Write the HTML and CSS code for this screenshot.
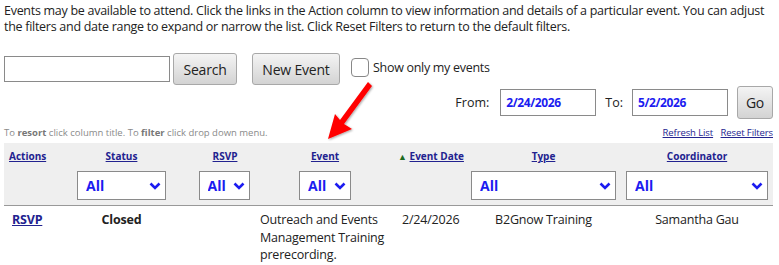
FILE: index.html
```html
<!DOCTYPE html>
<html lang="en">
<head>
    <meta charset="UTF-8">
    <meta name="viewport" content="width=device-width, initial-scale=1.0">
    <title>Events</title>
    <link rel="stylesheet" href="styles.css">
</head>
<body>
    <p class="intro">Events may be available to attend. Click the links in the Action column to view information and details of a particular event. You can adjust the filters and date range to expand or narrow the list. Click Reset Filters to return to the default filters.</p>

    <div class="search-row">
        <input type="text" class="search-box">
        <button class="btn btn-search">Search</button>
        <button class="btn btn-new">New Event</button>
        <label class="mine">
            <span class="check"></span>
            Show only my events
        </label>
    </div>

    <div class="date-row">
        <span class="date-label">From:</span>
        <input type="text" class="date-box" value="2/24/2026">
        <span class="date-label to">To:</span>
        <input type="text" class="date-box" value="5/2/2026">
        <button class="btn btn-go">Go</button>
    </div>

    <div class="hint-row">
        <span class="hint">To <b>resort</b> click column title. To <b>filter</b> click drop down menu.</span>
        <span class="hint-links">
            <a href="#">Refresh List</a>
            <a href="#">Reset Filters</a>
        </span>
    </div>

    <!-- callout arrow pointing at the Event column -->
    <svg class="callout" width="60" height="70" viewBox="0 0 60 70">
        <defs>
            <filter id="shade" x="-20%" y="-20%" width="140%" height="140%">
                <feDropShadow dx="1" dy="1" stdDeviation="1.2" flood-color="#000" flood-opacity="0.35"/>
            </filter>
        </defs>
        <path d="M45 3 L49 7 L21 45 L29 50 L5 60 L12 35 L17 41 Z" fill="#ff0000" filter="url(#shade)"/>
    </svg>

    <table class="events">
        <colgroup>
            <col style="width: 68px">
            <col style="width: 99px">
            <col style="width: 84px">
            <col style="width: 140px">
            <col style="width: 71px">
            <col style="width: 155px">
            <col style="width: 152px">
        </colgroup>
        <thead>
            <tr class="titles">
                <th class="c-actions"><a href="#">Actions</a></th>
                <th class="c-status"><a href="#">Status</a></th>
                <th class="c-rsvp"><a href="#">RSVP</a></th>
                <th class="c-event"><a href="#">Event</a></th>
                <th class="c-date"><span class="sort-up">&#9650;</span> <a href="#">Event Date</a></th>
                <th class="c-type"><a href="#">Type</a></th>
                <th class="c-coord"><a href="#">Coordinator</a></th>
            </tr>
            <tr class="filters">
                <th></th>
                <th class="c-status"><div class="filter w-status"><select><option>All</option></select><svg class="chev" width="12" height="8" viewBox="0 0 12 8"><path d="M1.5 1.5 L6 6 L10.5 1.5" fill="none" stroke="#1c1cf0" stroke-width="2.6"/></svg></div></th>
                <th class="c-rsvp"><div class="filter w-rsvp"><select><option>All</option></select><svg class="chev" width="12" height="8" viewBox="0 0 12 8"><path d="M1.5 1.5 L6 6 L10.5 1.5" fill="none" stroke="#1c1cf0" stroke-width="2.6"/></svg></div></th>
                <th class="c-event"><div class="filter w-event"><select><option>All</option></select><svg class="chev" width="12" height="8" viewBox="0 0 12 8"><path d="M1.5 1.5 L6 6 L10.5 1.5" fill="none" stroke="#1c1cf0" stroke-width="2.6"/></svg></div></th>
                <th></th>
                <th class="c-type"><div class="filter w-type"><select><option>All</option></select><svg class="chev" width="12" height="8" viewBox="0 0 12 8"><path d="M1.5 1.5 L6 6 L10.5 1.5" fill="none" stroke="#1c1cf0" stroke-width="2.6"/></svg></div></th>
                <th class="c-coord"><div class="filter w-coord"><select><option>All</option></select><svg class="chev" width="12" height="8" viewBox="0 0 12 8"><path d="M1.5 1.5 L6 6 L10.5 1.5" fill="none" stroke="#1c1cf0" stroke-width="2.6"/></svg></div></th>
            </tr>
        </thead>
        <tbody>
            <tr>
                <td class="c-actions"><a href="#" class="rsvp-link">RSVP</a></td>
                <td class="c-status"><b>Closed</b></td>
                <td class="c-rsvp"></td>
                <td class="c-event">Outreach and Events Management Training prerecording.</td>
                <td class="c-date">2/24/2026</td>
                <td class="c-type">B2Gnow Training</td>
                <td class="c-coord">Samantha Gau</td>
            </tr>
        </tbody>
    </table>
</body>
</html>
```

FILE: styles.css
```css
body {
    font-family: 'Open Sans', sans-serif;
    font-size: 12.5px;
    color: #222;
    background-color: #fff;
    margin: 0;
    padding: 3px 6px 0 4px;
    position: relative;
}

.intro {
    margin: 0;
    line-height: 16px;
    letter-spacing: -0.28px;
}

.search-row {
    display: flex;
    align-items: center;
    margin-top: 18px;
    height: 32px;
}

.search-box {
    width: 166px;
    height: 26px;
    box-sizing: border-box;
    border: 1px solid #8a8a8a;
    padding: 2px 4px;
    margin: 0;
}

.btn {
    font-family: 'Open Sans', sans-serif;
    font-size: 14px;
    color: #222;
    background: linear-gradient(#f4f4f4, #d3d3d3);
    border: 1px solid #a8a8a8;
    border-radius: 3px;
    height: 32px;
    padding: 0;
    margin: 0;
    cursor: pointer;
    white-space: nowrap;
    letter-spacing: -0.2px;
}

.btn-search {
    margin-left: 3px;
    width: 64px;
}

.btn-new {
    margin-left: 15px;
    width: 88px;
}

.mine {
    display: flex;
    align-items: center;
    margin-left: 11px;
    gap: 4px;
    margin-top: -4px;
    letter-spacing: -0.3px;
}

.check {
    display: inline-block;
    width: 16px;
    height: 17px;
    border: 1px solid #888;
    border-radius: 4px;
    background: #fff;
}

.date-row {
    display: flex;
    justify-content: flex-end;
    align-items: center;
    margin-top: 1px;
    height: 33px;
}

.date-label {
    margin-right: 11px;
}

.date-label.to {
    margin-left: 9px;
    margin-right: 9px;
}

.date-box {
    width: 96px;
    height: 27px;
    box-sizing: border-box;
    border: 1px solid #8a8a8a;
    padding: 0 5px;
    margin: 0;
    font-family: 'Open Sans', sans-serif;
    font-size: 12px;
    font-weight: bold;
    color: #1c1cf0;
    letter-spacing: -0.4px;
}

.btn-go {
    margin-left: 9px;
    width: 36px;
    height: 33px;
}

.hint-row {
    display: flex;
    justify-content: space-between;
    align-items: flex-end;
    margin-top: 7px;
    font-size: 9.5px;
}

.hint {
    color: #8a8a8a;
}

.hint b {
    color: #777;
}

.hint-links a {
    color: #24248f;
    margin-left: 5px;
    letter-spacing: -0.1px;
}

.callout {
    position: absolute;
    left: 323px;
    top: 79px;
}

.events {
    width: 769px;
    border-collapse: collapse;
    table-layout: fixed;
    margin-top: 4px;
}

.events thead {
    background-color: #efefef;
}

.events th {
    font-size: 10px;
    font-weight: bold;
    padding: 0;
}

.events th a,
.rsvp-link {
    color: #22228f;
}

.titles th {
    height: 24px;
    padding-top: 1px;
}

.filters th {
    height: 34px;
    padding-bottom: 3px;
    border-bottom: 1px solid #999;
}

.c-actions { text-align: left; }
.c-status  { text-align: center; }
.c-rsvp    { text-align: center; }
.c-event   { text-align: center; }
.c-date    { text-align: left; }
.c-type    { text-align: center; }
.c-coord   { text-align: center; }

.titles .c-actions { padding-left: 5px; }
.titles .c-rsvp { padding-left: 24px; }
.filters .c-rsvp { padding-left: 22px; }
.titles .c-date { padding-left: 3px; }

.sort-up {
    color: #1f6b1f;
    font-size: 9px;
}

.filter {
    position: relative;
    display: inline-block;
    vertical-align: middle;
}

.filter select {
    appearance: none;
    -webkit-appearance: none;
    width: 100%;
    height: 29px;
    box-sizing: border-box;
    border: 1px solid #8a8a8a;
    background: #fff;
    font-family: 'Open Sans', sans-serif;
    font-size: 14px;
    font-weight: bold;
    color: #1c1cf0;
    padding: 0 8px;
    margin: 0;
}

.chev {
    position: absolute;
    right: 5px;
    top: 11px;
    pointer-events: none;
}

.w-status { width: 89px; }
.w-rsvp   { width: 51px; }
.w-event  { width: 52px; }
.w-type   { width: 145px; }
.w-coord  { width: 142px; }

.events td {
    vertical-align: top;
    padding-top: 5px;
    line-height: 17.5px;
    letter-spacing: -0.2px;
}

.events td.c-actions { padding-left: 8px; }
.events td.c-event { text-align: left; padding-left: 5px; }
.events td.c-date { padding-left: 7px; }

.rsvp-link {
    font-weight: bold;
}
```
